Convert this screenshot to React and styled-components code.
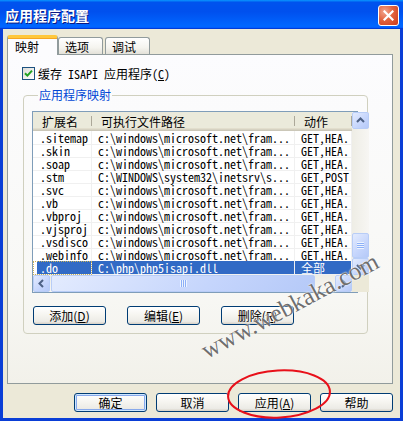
import React from "react";
import styled, { createGlobalStyle, css } from "styled-components";

const GlobalStyle = createGlobalStyle`
  html, body {
    margin: 0;
    padding: 0;
    background: #ffffff;
  }
  body {
    width: 403px;
    height: 421px;
    overflow: hidden;
    font-family: "Noto Sans Mono CJK SC", "Noto Sans CJK SC", "Liberation Mono", monospace;
    font-size: 12px;
    color: #000;
  }
`;

const rows = [
  [".sitemap", "c:\\windows\\microsoft.net\\fram...", "GET,HEA."],
  [".skin", "c:\\windows\\microsoft.net\\fram...", "GET,HEA."],
  [".soap", "c:\\windows\\microsoft.net\\fram...", "GET,HEA."],
  [".stm", "C:\\WINDOWS\\system32\\inetsrv\\s...", "GET,POST"],
  [".svc", "c:\\windows\\microsoft.net\\fram...", "GET,HEA."],
  [".vb", "c:\\windows\\microsoft.net\\fram...", "GET,HEA."],
  [".vbproj", "c:\\windows\\microsoft.net\\fram...", "GET,HEA."],
  [".vjsproj", "c:\\windows\\microsoft.net\\fram...", "GET,HEA."],
  [".vsdisco", "c:\\windows\\microsoft.net\\fram...", "GET,HEA."],
  [".webinfo", "c:\\windows\\microsoft.net\\fram...", "GET,HEA."],
  [".do", "C:\\php\\php5isapi.dll", "全部"],
];

const App = () => {
  return (
    <>
      <GlobalStyle />
      <Window>
        <TitleBar>
          <Title>应用程序配置</Title>
          <CloseButton>
            <svg width="11" height="11" viewBox="0 0 11 11">
              <path d="M1.5 1.5 L9.5 9.5 M9.5 1.5 L1.5 9.5" stroke="#fff" strokeWidth="2.2" strokeLinecap="square" />
            </svg>
          </CloseButton>
        </TitleBar>

        <Body>
          <Tabs>
            <Tab selected _width="51px">映射</Tab>
            <Tab _width="45px">选项</Tab>
            <Tab _width="45px" _gap="2px">调试</Tab>
          </Tabs>

          <TabPanel>
            <CheckRow>
              <CheckBox>
                <svg width="9" height="9" viewBox="0 0 9 9">
                  <path d="M1 4.2 L3.4 6.6 L8 1.6" stroke="#21A121" strokeWidth="2" fill="none" />
                </svg>
              </CheckBox>
              <span>缓存 ISAPI 应用程序(<u>C</u>)</span>
            </CheckRow>

            <GroupBox>
              <Legend>应用程序映射</Legend>
              <ListView>
                <ListContent>
                  <HeaderRow>
                    <HeaderCell>扩展名</HeaderCell>
                    <HeaderCell>可执行文件路径</HeaderCell>
                    <HeaderCell>动作</HeaderCell>
                  </HeaderRow>
                  {rows.map((r, i) => (
                    <Row key={r[0]} selected={i === rows.length - 1}>
                      <Cell first>{r[0]}</Cell>
                      <Cell>{r[1]}</Cell>
                      <Cell>{r[2]}</Cell>
                    </Row>
                  ))}
                </ListContent>

                <VScroll>
                  <ScrollButton>
                    <Arrow dir="up" />
                  </ScrollButton>
                  <VTrack>
                    <VThumb>
                      <Grip vertical />
                    </VThumb>
                  </VTrack>
                  <ScrollButton>
                    <Arrow dir="down" />
                  </ScrollButton>
                </VScroll>

                <HScroll>
                  <ScrollButton>
                    <Arrow dir="left" />
                  </ScrollButton>
                  <HTrack>
                    <HThumb>
                      <Grip />
                    </HThumb>
                  </HTrack>
                  <ScrollButton>
                    <Arrow dir="right" />
                  </ScrollButton>
                </HScroll>
                <Corner />
              </ListView>

              <ButtonRow>
                <XPButton>添加(<u>D</u>)</XPButton>
                <XPButton>编辑(<u>E</u>)</XPButton>
                <XPButton>删除(<u>R</u>)</XPButton>
              </ButtonRow>
            </GroupBox>
          </TabPanel>

          <Footer>
            <XPButton isDefault>确定</XPButton>
            <XPButton>取消</XPButton>
            <XPButton>应用(<u>A</u>)</XPButton>
            <XPButton>帮助</XPButton>
          </Footer>
        </Body>

        <Watermark>www.webkaka.com</Watermark>
        <RedCircle width="108" height="54" viewBox="0 0 108 54">
          <ellipse cx="53" cy="26" rx="51" ry="23.5" fill="none" stroke="#E8101A" strokeWidth="2" transform="rotate(-3 53 26)" />
        </RedCircle>
      </Window>
    </>
  );
};

const Arrow = ({ dir }) => {
  const paths = {
    up: "M1 6 L4.5 2.5 L8 6",
    down: "M1 3 L4.5 6.5 L8 3",
    left: "M6 1 L2.5 4.5 L6 8",
    right: "M3 1 L6.5 4.5 L3 8",
  };
  return (
    <svg width="9" height="9" viewBox="0 0 9 9">
      <path d={paths[dir]} stroke="#4D6185" strokeWidth="2" fill="none" />
    </svg>
  );
};

// window frame

const Window = styled.div`
  position: relative;
  width: 403px;
  height: 421px;
  display: flex;
  flex-direction: column;
  background: #0a3ed6;
  overflow: hidden;
`;

const TitleBar = styled.div`
  height: 29px;
  flex-shrink: 0;
  display: flex;
  align-items: center;
  justify-content: space-between;
  padding: 0 4px 0 5px;
  background: linear-gradient(
    180deg,
    #0997ff 0%,
    #0053ee 8%,
    #0050ee 40%,
    #0066ff 88%,
    #0066ff 93%,
    #005bff 95%,
    #003dd7 96%,
    #003dd7 100%
  );
`;

const Title = styled.span`
  color: #ffffff;
  font-family: "Noto Sans CJK SC", sans-serif;
  font-weight: 700;
  font-size: 14px;
  text-shadow: 1px 1px 0 #0a1883;
`;

const CloseButton = styled.div`
  width: 19px;
  height: 19px;
  display: flex;
  align-items: center;
  justify-content: center;
  border: 1px solid #ffffff;
  border-radius: 3px;
  background: radial-gradient(circle at 30% 30%, #f2a58e 0%, #e2643f 45%, #cd3a1a 100%);
  margin-top: 1px;
`;

const Body = styled.div`
  flex: 1;
  margin: 0 3px 3px 3px;
  background: #ece9d8;
  padding: 6px 7px 6px 4px;
  display: flex;
  flex-direction: column;
`;

// tabs

const Tabs = styled.div`
  display: flex;
  align-items: flex-end;
  height: 19px;
  position: relative;
  z-index: 1;
`;

const Tab = styled.div`
  width: ${({ _width }) => _width};
  margin-left: ${({ _gap }) => _gap || "0"};
  box-sizing: border-box;
  display: flex;
  align-items: center;
  padding-left: 6px;
  font-family: "Noto Sans CJK SC", sans-serif;
  font-size: 12px;
  border: 1px solid #919b9c;
  border-bottom: none;
  border-radius: 3px 3px 0 0;

  ${({ selected }) =>
    selected
      ? css`
          height: 20px;
          margin-bottom: -1px;
          padding-left: 7px;
          background: #fcfcfe;
          border-top: 3px solid #ffc83c;
          box-shadow: inset 0 1px 0 #f5a623;
        `
      : css`
          height: 17px;
          background: linear-gradient(180deg, #ffffff 0%, #f5f4ef 60%, #e3e1d8 100%);
        `}
`;

const TabPanel = styled.div`
  flex: 1;
  border: 1px solid #919b9c;
  background: linear-gradient(180deg, #fcfcfe 0%, #f8f8f5 70%, #f2f1ea 100%);
  padding: 12px 12px 0 14px;
  margin-bottom: 9px;
`;

const CheckRow = styled.div`
  display: flex;
  align-items: center;
  gap: 3px;
  height: 13px;
  font-size: 12px;
`;

const CheckBox = styled.div`
  width: 11px;
  height: 11px;
  border: 1px solid #1c5180;
  background: linear-gradient(135deg, #dcdcd7 0%, #ffffff 100%);
  display: flex;
  align-items: center;
  justify-content: center;
`;

// group

const GroupBox = styled.fieldset`
  margin: 8px 12px 0 1px;
  padding: 9px 9px 8px 8px;
  border: 1px solid #d0d0bf;
  border-radius: 4px;
  min-width: 0;
`;

const Legend = styled.legend`
  color: #0046d5;
  font-family: "Noto Sans CJK SC", sans-serif;
  font-size: 12px;
  line-height: 14px;
  padding: 0 1px;
  margin-left: 6px;
`;

const ListView = styled.div`
  border: 1px solid #7f9db9;
  background: #ffffff;
  display: grid;
  grid-template-columns: 319px 17px;
  grid-template-rows: 163px 17px;
`;

const ListContent = styled.div`
  overflow: hidden;
`;

const columns = "59px 203px 57px";

const HeaderRow = styled.div`
  display: grid;
  grid-template-columns: ${columns};
  height: 19px;
`;

const HeaderCell = styled.div`
  position: relative;
  display: flex;
  align-items: center;
  padding-left: 9px;
  font-family: "Noto Sans CJK SC", sans-serif;
  font-size: 12px;
  background: #ebeadb;
  box-shadow: inset 0 -1px 0 #cbc7b8, inset 0 -2px 0 #d6d2c2, inset 0 -3px 0 #e2decd;

  &::after {
    content: "";
    position: absolute;
    right: 0;
    top: 4px;
    bottom: 5px;
    width: 1px;
    background: #aca899;
    box-shadow: 1px 0 0 #ffffff;
  }
`;

const Row = styled.div`
  display: grid;
  grid-template-columns: ${columns};
  height: 13px;
  line-height: 13px;
  ${({ selected }) =>
    selected &&
    css`
      color: #ffffff;
      & > div {
        background: #316ac5;
      }
      & > div:first-child {
        background: linear-gradient(90deg, #ffffff 4px, #316ac5 4px);
        outline: 1px dotted #c9b25a;
        outline-offset: -1px;
      }
    `}
`;

const Cell = styled.div`
  padding-left: ${({ first }) => (first ? "7px" : "6px")};
  white-space: nowrap;
  border-right: 1px solid #f0f0f0;
  border-bottom: 1px solid #f0f0f0;
  box-sizing: border-box;
  font-size: 12px;
`;

// scrollbars

const scrollPart = css`
  border: 1px solid #b8cdf7;
  border-radius: 2px;
  background: linear-gradient(135deg, #e3ebfe 0%, #c5d5fc 60%, #b5c9f8 100%);
  box-sizing: border-box;
`;

const ScrollButton = styled.div`
  ${scrollPart}
  width: 17px;
  height: 17px;
  flex-shrink: 0;
  display: flex;
  align-items: center;
  justify-content: center;
`;

const VScroll = styled.div`
  grid-row: 1;
  grid-column: 2;
  display: flex;
  flex-direction: column;
  background: #f3f1ec;
`;

const VTrack = styled.div`
  flex: 1;
  display: flex;
  flex-direction: column;
  justify-content: flex-end;
  background: linear-gradient(90deg, #eeede5 0%, #f7f6f3 100%);
`;

const VThumb = styled.div`
  ${scrollPart}
  height: 25px;
  display: flex;
  align-items: center;
  justify-content: center;
`;

const HScroll = styled.div`
  grid-row: 2;
  grid-column: 1;
  display: flex;
  background: #f3f1ec;
`;

const HTrack = styled.div`
  flex: 1;
  display: flex;
  padding-left: 1px;
  background: linear-gradient(180deg, #eeede5 0%, #f7f6f3 100%);
`;

const HThumb = styled.div`
  ${scrollPart}
  width: 264px;
  display: flex;
  align-items: center;
  justify-content: center;
`;

const Grip = styled.div`
  width: 7px;
  height: 7px;
  background: ${({ vertical }) =>
    vertical
      ? "repeating-linear-gradient(180deg, #eef4fe 0 1px, #8cb0f8 1px 2px)"
      : "repeating-linear-gradient(90deg, #eef4fe 0 1px, #8cb0f8 1px 2px)"};
`;

const Corner = styled.div`
  grid-row: 2;
  grid-column: 2;
  background: #ece9d8;
`;

// buttons

const ButtonRow = styled.div`
  display: flex;
  gap: 21px;
  margin-top: 13px;
  padding-left: 1px;
`;

const Footer = styled.div`
  display: flex;
  justify-content: flex-end;
  gap: 9px;
`;

const XPButton = styled.div`
  width: 73px;
  height: 19px;
  box-sizing: border-box;
  display: flex;
  align-items: center;
  justify-content: center;
  border: 1px solid #003c74;
  border-radius: 3px;
  font-family: "Noto Sans CJK SC", sans-serif;
  font-size: 12px;
  background: linear-gradient(180deg, #ffffff 0%, #f5f4ef 50%, #ecebe6 85%, #d6d0c5 100%);
  ${({ isDefault }) =>
    isDefault &&
    css`
      box-shadow: inset 0 0 0 1px #cee7ff, inset 0 0 0 2px #88a9eb;
    `}

  & u {
    text-decoration: underline;
  }
`;

// overlays

const Watermark = styled.span`
  position: absolute;
  left: 290px;
  top: 306px;
  transform: translate(-50%, -50%) rotate(-28deg);
  font-family: "Liberation Serif", serif;
  font-size: 25px;
  color: rgba(85, 85, 85, 0.85);
  text-shadow: 0 0 1px #ffffff, 0 0 2px #ffffff;
  white-space: nowrap;
  pointer-events: none;
`;

const RedCircle = styled.svg`
  position: absolute;
  left: 226px;
  top: 368px;
  pointer-events: none;
`;

export default App;
